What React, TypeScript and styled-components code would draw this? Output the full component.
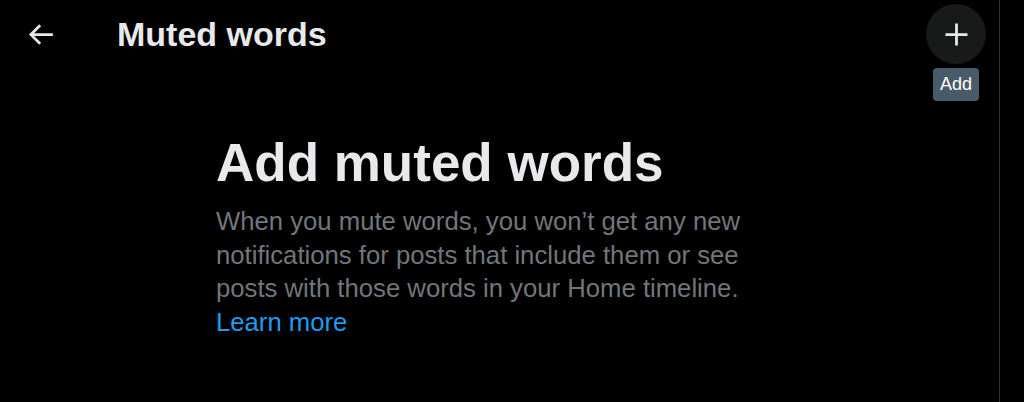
import styled, { createGlobalStyle } from "styled-components";

const GlobalStyle = createGlobalStyle`
  html, body {
    margin: 0;
    padding: 0;
    background: #000000;
  }
  body {
    font-family: "Liberation Sans", Arial, sans-serif;
    color: #e7e9ea;
  }
`;

const Page = styled.div`
  display: flex;
  min-height: 402px;
  background: #000000;
`;

const Column = styled.main`
  width: 999px;
  border-right: 1px solid #2f3336;
  min-height: 402px;
`;

const Header = styled.header`
  height: 68px;
  display: flex;
  align-items: center;
  padding: 0 13px 0 12px;
`;

const BackButton = styled.button`
  width: 56px;
  height: 56px;
  border: none;
  background: transparent;
  color: #e7e9ea;
  display: flex;
  align-items: center;
  justify-content: center;
  padding: 0;
  cursor: pointer;
`;

const Title = styled.h2`
  margin: 0 0 0 49px;
  flex: 1;
  font-size: 34px;
  line-height: 40px;
  font-weight: 700;
  color: #e7e9ea;
`;

const AddWrap = styled.div`
  position: relative;
  width: 60px;
  height: 60px;
`;

const AddButton = styled.button`
  width: 60px;
  height: 60px;
  border-radius: 50%;
  border: none;
  background: #181919;
  color: #e7e9ea;
  display: flex;
  align-items: center;
  justify-content: center;
  padding: 0;
  cursor: pointer;
`;

const Tooltip = styled.span`
  position: absolute;
  top: 64px;
  left: 50%;
  transform: translateX(-50%);
  background: #495a69;
  color: #ffffff;
  font-size: 18px;
  line-height: 33px;
  padding: 0 7px;
  border-radius: 4px;
  white-space: nowrap;
`;

const EmptyState = styled.section`
  width: 567px;
  margin: 65px auto 0;
`;

const Headline = styled.h1`
  margin: 0 0 12px;
  font-size: 53px;
  line-height: 60px;
  font-weight: 700;
  color: #e7e9ea;
`;

const Body = styled.p`
  margin: 0;
  font-size: 25.7px;
  line-height: 33.6px;
  color: #71767b;
`;

const LearnMore = styled.a`
  color: #1d9bf0;
  text-decoration: none;
`;

function Icon({ d }: { d: string }) {
  return (
    <svg width="33" height="33" viewBox="0 0 24 24" fill="currentColor">
      <path d={d} />
    </svg>
  );
}

export default function App() {
  return (
    <Page>
      <GlobalStyle />
      <Column>
        <Header>
          <BackButton aria-label="Back">
            <Icon d="M7.414 13l5.043 5.04-1.414 1.42L3.586 12l7.457-7.46 1.414 1.42L7.414 11H21v2H7.414z" />
          </BackButton>
          <Title>Muted words</Title>
          <AddWrap>
            <AddButton aria-label="Add">
              <Icon d="M11 11V4h2v7h7v2h-7v7h-2v-7H4v-2h7z" />
            </AddButton>
            <Tooltip>Add</Tooltip>
          </AddWrap>
        </Header>
        <EmptyState>
          <Headline>Add muted words</Headline>
          <Body>
            When you mute words, you won’t get any new notifications for posts
            that include them or see posts with those words in your Home
            timeline. <LearnMore href="#">Learn more</LearnMore>
          </Body>
        </EmptyState>
      </Column>
    </Page>
  );
}
